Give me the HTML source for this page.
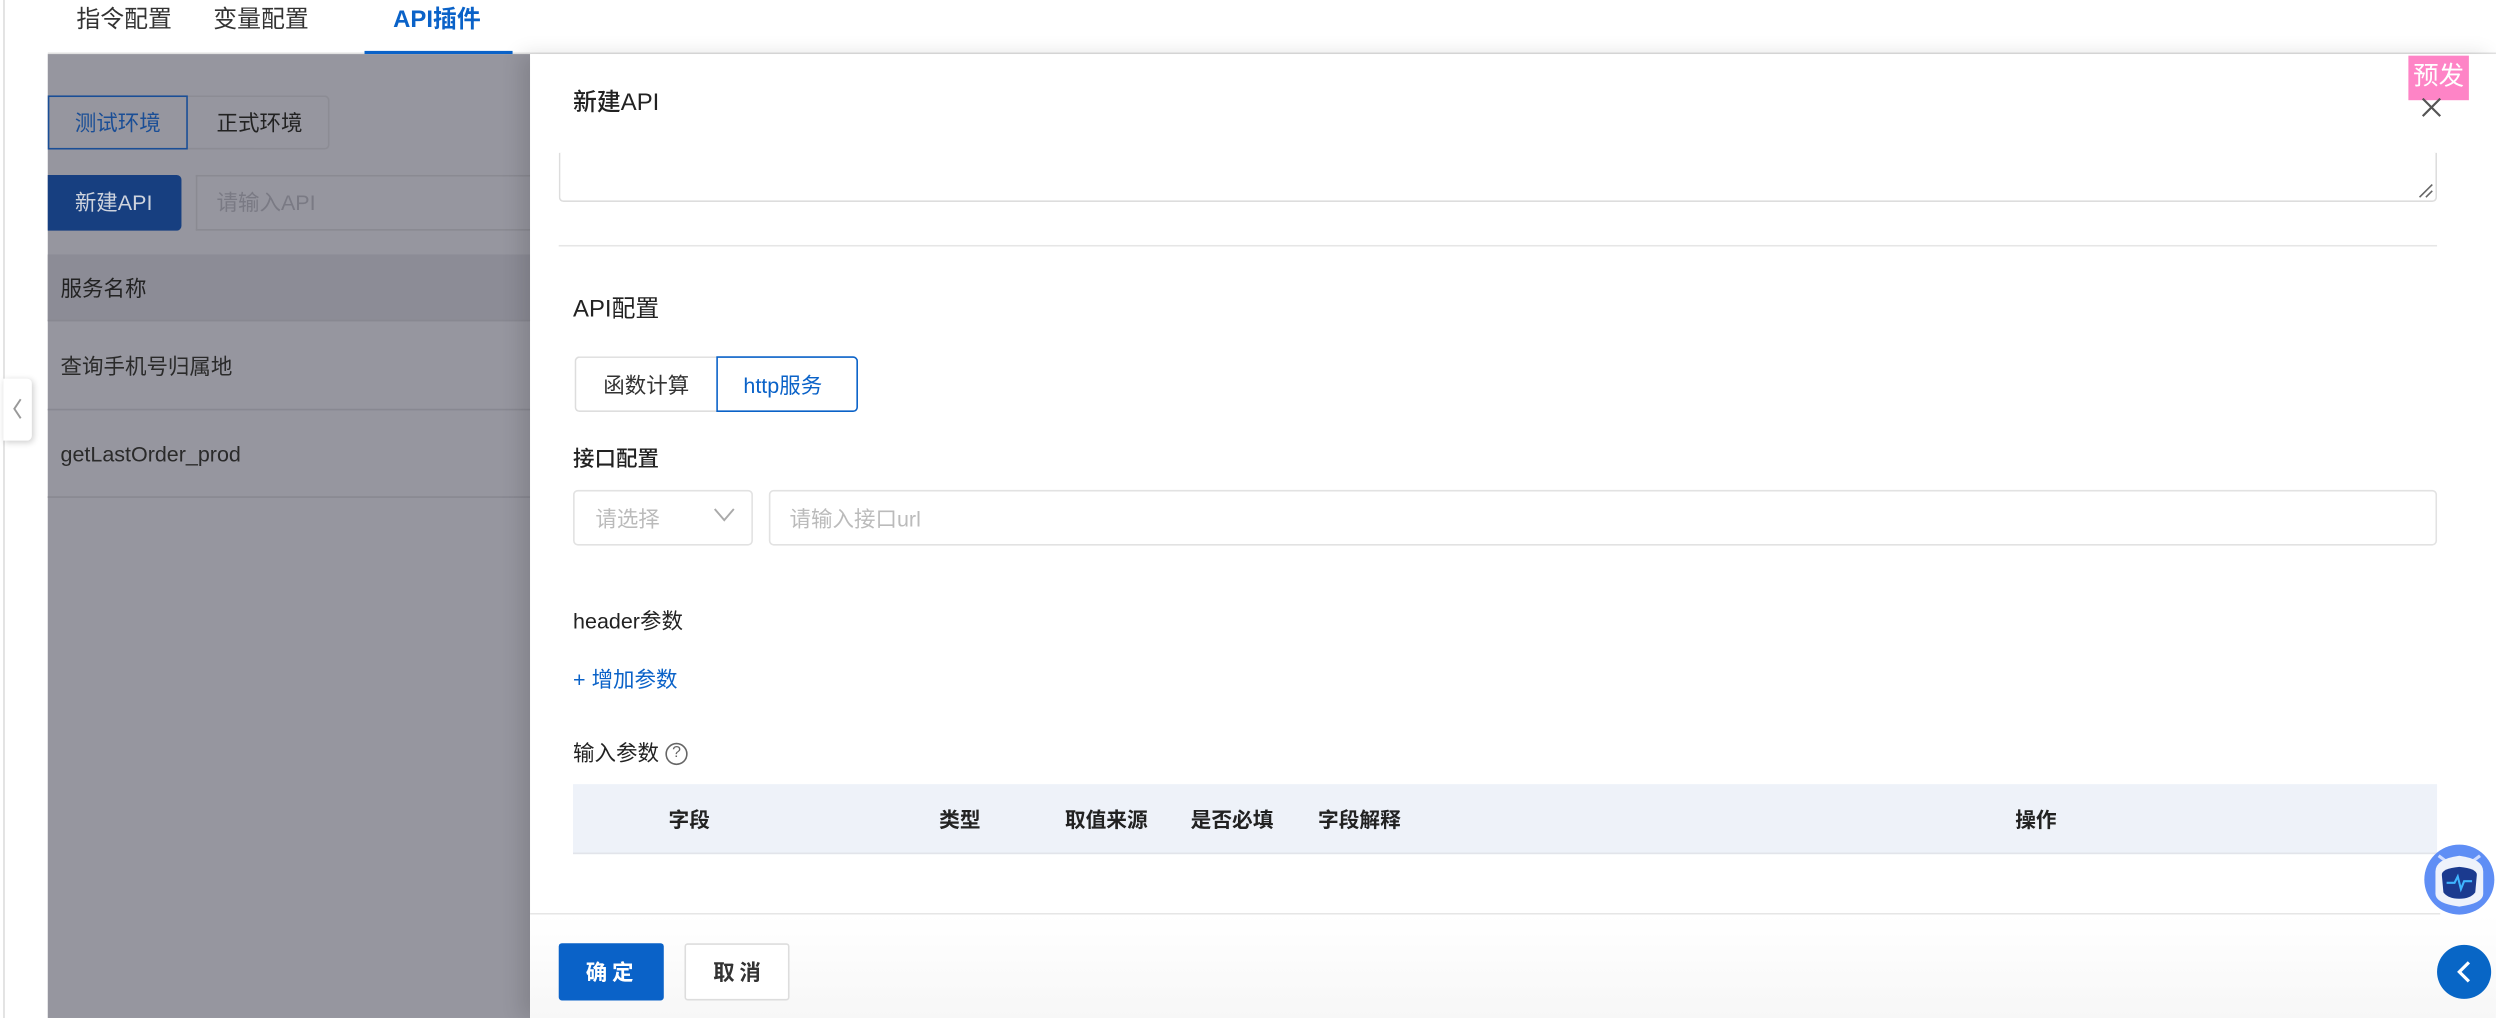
<!DOCTYPE html>
<html><head><meta charset="utf-8"><style>
*{box-sizing:border-box;margin:0;padding:0}
html,body{width:2496px;height:1018px;overflow:hidden;background:#fff}
#w{position:absolute;left:0;top:0;width:1568px;height:640px;transform:scale(1.5918,1.5906);transform-origin:0 0;font-family:"Liberation Sans","Noto Sans CJK SC",sans-serif;color:#333;font-size:14px}
.a{position:absolute}
.t{position:absolute;white-space:nowrap;line-height:1;margin-top:1px}
</style></head><body><div id="w">
<div class="a" style="left:2px;top:0;width:1px;height:640px;background:#ddd"></div>
<div class="t" style="left:48px;top:4px;font-size:15px">指令配置</div>
<div class="t" style="left:134px;top:4px;font-size:15px">变量配置</div>
<div class="t" style="left:247px;top:4px;font-size:15px;color:#0a62c8;font-weight:bold">API插件</div>
<div class="a" style="left:30px;top:33px;width:1538px;height:1px;background:#e2e2e2"></div>
<div class="a" style="left:229px;top:32px;width:93px;height:2px;background:#0a62c8"></div>
<div class="a" style="left:30px;top:34px;width:303px;height:606px;background:#96969f"></div>
<div class="a" style="left:30px;top:60px;width:88px;height:34px;border:1px solid #1a4e96"></div>
<div class="t" style="left:47px;top:70px;font-size:13.5px;color:#1a4e96">测试环境</div>
<div class="a" style="left:118px;top:60px;width:89px;height:34px;border:1px solid #8c8c94;border-left:none;border-radius:0 3px 3px 0"></div>
<div class="t" style="left:136px;top:70px;font-size:13.5px;color:#222">正式环境</div>
<div class="a" style="left:30px;top:110px;width:84px;height:35px;background:#173f80;border-radius:0 3px 3px 0"></div>
<div class="t" style="left:47px;top:120px;font-size:13.5px;color:#cfd4de">新建API</div>
<div class="a" style="left:123px;top:110px;width:210px;height:35px;border:1px solid #8a8a92;border-right:none"></div>
<div class="t" style="left:136px;top:120px;font-size:13.5px;color:#7a7a84">请输入API</div>
<div class="a" style="left:30px;top:160px;width:303px;height:42px;background:#8c8c96;border-bottom:1px solid #888891"></div>
<div class="t" style="left:38px;top:174px;font-size:13.5px;color:#222">服务名称</div>
<div class="t" style="left:38px;top:223px;font-size:13.5px;color:#2a2a2a">查询手机号归属地</div>
<div class="a" style="left:30px;top:257px;width:303px;height:1px;background:#888891"></div>
<div class="t" style="left:38px;top:278px;font-size:13.5px;color:#2a2a2a">getLastOrder_prod</div>
<div class="a" style="left:30px;top:312px;width:303px;height:1px;background:#888891"></div>
<div class="a" style="left:2px;top:238px;width:18px;height:39px;background:#fff;border-radius:0 3px 3px 0;box-shadow:1px 1px 4px rgba(0,0,0,.2)"></div>
<svg class="a" style="left:6px;top:249px" width="10" height="16"><path d="M7 2 L3 8 L7 14" fill="none" stroke="#999" stroke-width="1.2"/></svg>
<div class="a" style="left:333px;top:34px;width:1235px;height:606px;background:#fff;box-shadow:-6px 0 12px rgba(0,0,0,.12)"></div>
<div class="t" style="left:360px;top:56px;font-size:15px;color:#222;font-weight:500">新建API</div>
<div class="a" style="left:351px;top:96px;width:1180px;height:31px;border:1px solid #ddd;border-top:none;border-radius:0 0 3px 3px"></div>
<svg class="a" style="left:1519px;top:115px" width="10" height="10"><path d="M1 9 L9 1 M5 9 L9 5" stroke="#666" stroke-width="1"/></svg>
<div class="a" style="left:351px;top:154px;width:1180px;height:1px;background:#e6e6e6"></div>
<div class="t" style="left:360px;top:186px;font-size:15px;color:#222">API配置</div>
<div class="a" style="left:361px;top:224px;width:90px;height:35px;border:1px solid #ddd;border-right:none;border-radius:3px 0 0 3px"></div>
<div class="t" style="left:379px;top:235px;font-size:13.5px;color:#333">函数计算</div>
<div class="a" style="left:450px;top:224px;width:89px;height:35px;border:1px solid #0a62c8;border-radius:0 3px 3px 0"></div>
<div class="t" style="left:467px;top:235px;font-size:13.5px;color:#0a62c8">http服务</div>
<div class="t" style="left:360px;top:281px;font-size:13.5px;color:#222;font-weight:500">接口配置</div>
<div class="a" style="left:360px;top:308px;width:113px;height:35px;border:1px solid #e2e2e2;border-radius:3px"></div>
<div class="t" style="left:374px;top:319px;font-size:13.5px;color:#bbb">请选择</div>
<svg class="a" style="left:448px;top:319px" width="14" height="10"><path d="M1 1 L7 8 L13 1" fill="none" stroke="#aaa" stroke-width="1.2"/></svg>
<div class="a" style="left:483px;top:308px;width:1048px;height:35px;border:1px solid #e2e2e2;border-radius:3px"></div>
<div class="t" style="left:496px;top:319px;font-size:13.5px;color:#bbb">请输入接口url</div>
<div class="t" style="left:360px;top:383px;font-size:13.5px;color:#222">header参数</div>
<div class="t" style="left:360px;top:420px;font-size:13.5px;color:#0a62c8">+ 增加参数</div>
<div class="t" style="left:360px;top:466px;font-size:13.5px;color:#222">输入参数</div>
<div class="a" style="left:418px;top:467px;width:14px;height:14px;border:1px solid #666;border-radius:50%;font-size:10px;line-height:12px;text-align:center;color:#666">?</div>
<div class="a" style="left:360px;top:493px;width:1171px;height:44px;background:#eef2f9;border-bottom:1px solid #e2e4ea"></div>
<div class="t" style="left:420px;top:508px;font-size:13px;color:#222;font-weight:bold">字段</div>
<div class="t" style="left:590px;top:508px;font-size:13px;color:#222;font-weight:bold">类型</div>
<div class="t" style="left:669px;top:508px;font-size:13px;color:#222;font-weight:bold">取值来源</div>
<div class="t" style="left:748px;top:508px;font-size:13px;color:#222;font-weight:bold">是否必填</div>
<div class="t" style="left:828px;top:508px;font-size:13px;color:#222;font-weight:bold">字段解释</div>
<div class="t" style="left:1266px;top:508px;font-size:13px;color:#222;font-weight:bold">操作</div>
<div class="a" style="left:333px;top:574px;width:1200px;height:1px;background:#e6e6e6"></div>
<div class="a" style="left:333px;top:575px;width:1235px;height:65px;background:linear-gradient(#fff,#f7f7f7)"></div>
<div class="a" style="left:351px;top:593px;width:66px;height:36px;background:#0a62c8;border-radius:2px"></div>
<div class="t" style="left:368px;top:604px;font-size:13.5px;color:#fff;font-weight:bold;letter-spacing:3px">确定</div>
<div class="a" style="left:430px;top:593px;width:66px;height:36px;border:1px solid #ddd;border-radius:2px;background:#fff"></div>
<div class="t" style="left:448px;top:604px;font-size:13.5px;color:#333;font-weight:bold;letter-spacing:3px">取消</div>
<div class="a" style="left:1513px;top:35px;width:38px;height:28px;background:#fe84c6"></div>
<div class="t" style="left:1516px;top:40px;font-size:16px;color:#fff">预发</div>
<svg class="a" style="left:1521px;top:61px" width="13" height="13"><path d="M1 1 L12 12 M12 1 L1 12" stroke="#555" stroke-width="1.4"/></svg>
<svg class="a" style="left:1522px;top:528px" width="46" height="50">
<circle cx="23" cy="25" r="22" fill="#5f8ef5"/>
<path d="M10 10 L14 13 M36 10 L32 13" stroke="#cfdcff" stroke-width="2"/>
<path d="M8 20 Q8 12 23 10 Q38 12 38 20 L38 34 Q38 40 23 42 Q8 40 8 34 Z" fill="#eef2fb"/>
<path d="M12 22 Q12 18 23 17 Q34 18 34 22 L33 33 Q30 37 23 37 Q16 37 13 33 Z" fill="#1b3a8f"/>
<path d="M15 27 L20 27 L22 23 L24 31 L26 26 L31 26" fill="none" stroke="#3fb5ff" stroke-width="1.3"/>
</svg>
<div class="a" style="left:1531px;top:594px;width:34px;height:34px;border-radius:50%;background:#0866c6"></div>
<svg class="a" style="left:1541px;top:603px" width="14" height="16"><path d="M10 2 L4 8 L10 14" fill="none" stroke="#fff" stroke-width="2"/></svg>
</div></body></html>
